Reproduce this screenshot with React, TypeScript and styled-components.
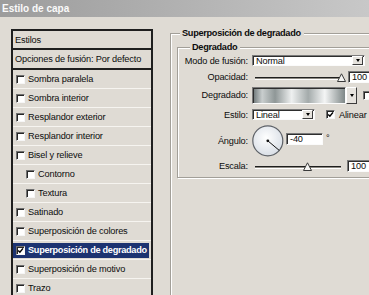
import React from 'react';
import styled, { createGlobalStyle } from 'styled-components';

const GlobalStyle = createGlobalStyle`
  html, body {
    margin: 0;
    padding: 0;
    background: #dfdbd4;
  }
  body {
    font-family: "Liberation Sans", Arial, sans-serif;
    font-size: 9.2px;
    letter-spacing: -0.15px;
    color: #0c0c0c;
  }
  fieldset, legend { font: inherit; }
`;

const BG = '#dfdbd4';

const Window = styled.div`
  width: 369px;
  height: 295px;
  overflow: hidden;
  background: ${BG};
  display: flex;
  flex-direction: column;
`;

const TitleBar = styled.div`
  height: 17px;
  flex: none;
  display: flex;
  align-items: center;
  padding-left: 2px;
  background: linear-gradient(90deg, #9c9c9c 0%, #c8c8c8 100%);
  color: #fafafa;
  font-weight: bold;
  font-size: 10px;
  letter-spacing: 0;
`;

const Body = styled.div`
  flex: 1;
  min-height: 0;
  display: flex;
  align-items: flex-start;
  gap: 17px;
  padding: 10px 0 0 11px;
`;

/* left: list of layer styles */
const StyleList = styled.div`
  width: 142px;
  flex: none;
  margin-top: 2px;
  box-sizing: border-box;
  border: 2px solid #1f1f1f;
  border-bottom: 0;
`;

const ListHead = styled.div<{ $h: number }>`
  height: ${(p) => p.$h}px;
  display: flex;
  align-items: center;
  padding-left: 2px;
  border-bottom: 2px solid #1f1f1f;
  white-space: nowrap;
`;

const ListRow = styled.div`
  height: 18px;
  display: flex;
  align-items: center;
  border-bottom: 1px solid #f6f4f0;
`;

const RowItem = styled.div<{ $indent?: boolean; $active?: boolean }>`
  flex: 1;
  height: 15px;
  margin-right: 2px;
  display: flex;
  align-items: center;
  gap: 3px;
  padding-left: ${(p) => (p.$indent ? 13 : 3)}px;
  background: ${(p) => (p.$active ? '#1c3371' : 'transparent')};
  color: ${(p) => (p.$active ? '#ffffff' : 'inherit')};
  font-weight: ${(p) => (p.$active ? 'bold' : 'normal')};
  letter-spacing: ${(p) => (p.$active ? '-0.3px' : 'inherit')};
  white-space: nowrap;
`;

const Box = styled.span`
  width: 9px;
  height: 9px;
  flex: none;
  box-sizing: border-box;
  background: #fff;
  border: 1px solid;
  border-color: #707070 #f6f6f6 #f6f6f6 #707070;
  box-shadow: inset 1px 1px 0 #262626;
  display: flex;
  align-items: center;
  justify-content: center;
`;

const Checkbox: React.FC<{ checked?: boolean; label?: string }> = ({ checked, label }) => (
  <Box role="checkbox" aria-checked={!!checked} aria-label={label}>
    {checked && (
      <svg width="7" height="7" viewBox="0 0 7 7">
        <path d="M1.2 3.4 L2.9 5.2 L6 1.4" fill="none" stroke="#000" strokeWidth="1.5" />
      </svg>
    )}
  </Box>
);

/* right: group boxes */
const Group = styled.fieldset<{ $pad: number; $top: number }>`
  flex: none;
  width: 260px;
  margin: ${(p) => p.$top}px 0 0 0;
  padding: 0 0 0 ${(p) => p.$pad}px;
  min-width: 0;
  border: 1px solid #a29f98;
  box-shadow: inset 1px 1px 0 #fff, 1px 1px 0 #fff;
`;

const OuterGroup = styled(Group)`
  height: 300px;
`;

const GroupTitle = styled.legend<{ $offset: number }>`
  margin-left: ${(p) => p.$offset}px;
  padding: 0 3px 0 2px;
  line-height: 12px;
  font-weight: bold;
  letter-spacing: -0.3px;
  background: ${BG};
  white-space: nowrap;
`;

const FormGrid = styled.div`
  display: grid;
  grid-template-columns: 71px auto;
  grid-template-rows: 15px 18px 18px 21px 32px 18px;
  column-gap: 3px;
  align-items: center;
  padding-bottom: 2px;
`;

const Label = styled.span`
  text-align: right;
  padding-right: 1px;
  white-space: nowrap;
`;

const Controls = styled.div<{ $gap?: number }>`
  display: flex;
  align-items: center;
  gap: ${(p) => p.$gap ?? 0}px;
  white-space: nowrap;
`;

const Sunken = styled.div<{ $w: number; $h: number }>`
  width: ${(p) => p.$w}px;
  height: ${(p) => p.$h}px;
  flex: none;
  box-sizing: border-box;
  background: #fff;
  border: 1px solid;
  border-color: #7a7a7a #fbfbfb #fbfbfb #7a7a7a;
  box-shadow: inset 1px 1px 0 #2e2e2e;
  display: flex;
  align-items: center;
  padding-left: 3px;
`;

const SelectBox = styled(Sunken)`
  justify-content: space-between;
  padding-right: 1px;
`;

const DropButton = styled.span<{ $h: number }>`
  width: 11px;
  height: ${(p) => p.$h}px;
  flex: none;
  box-sizing: border-box;
  background: #e6e3de;
  border: 1px solid;
  border-color: #ffffff #3c3c3c #3c3c3c #ffffff;
  display: flex;
  align-items: center;
  justify-content: center;
  &::after {
    content: '';
    border-left: 2.5px solid transparent;
    border-right: 2.5px solid transparent;
    border-top: 3px solid #000;
  }
`;

const GradientSwatch = styled(Sunken)`
  padding: 0;
  background: linear-gradient(
    90deg,
    #6b7475 0%,
    #c9cece 10%,
    #8f9797 24%,
    #eef0f0 42%,
    #a4abab 60%,
    #f4f5f5 78%,
    #7e8787 100%
  );
`;

const SliderWrap = styled.div<{ $w: number }>`
  position: relative;
  width: ${(p) => p.$w}px;
  height: 10px;
  margin-left: 3px;
  flex: none;
  display: flex;
  align-items: center;
  padding-top: 3px;
  box-sizing: border-box;
`;

const Track = styled.div`
  flex: 1;
  height: 1px;
  background: #8c8982;
  border-top: 1px solid #1e1e1e;
  border-bottom: 1px solid #ffffff;
`;

const Thumb = styled.svg`
  position: absolute;
  top: 1px;
  margin-left: -4.5px;
`;

const Slider: React.FC<{ width: number; value: number }> = ({ width, value }) => (
  <SliderWrap $w={width}>
    <Track />
    <Thumb width="9" height="9" viewBox="0 0 9 9" style={{ left: width * value }}>
      <path d="M0.5 8.5 L4.5 0.8 L8.5 8.5 Z" fill="#f4f4f2" stroke="#3a3a3a" strokeWidth="1" />
    </Thumb>
  </SliderWrap>
);

const Degree = styled.span`
  align-self: flex-start;
  margin: 8px 0 0 1px;
`;

const CheckLabel = styled.span<{ $ml?: number }>`
  display: flex;
  align-items: center;
  gap: 4px;
  margin-left: ${(p) => p.$ml ?? 0}px;
`;

const AngleDial: React.FC<{ angle: number }> = ({ angle }) => {
  const rad = (angle * Math.PI) / 180;
  const x2 = 15.8 + 15 * Math.cos(rad);
  const y2 = 15.8 - 15 * Math.sin(rad);
  return (
    <svg width="32" height="32" viewBox="0 0 32 32" style={{ flex: 'none' }}>
      <defs>
        <radialGradient id="dialFill" cx="45%" cy="40%" r="65%">
          <stop offset="0" stopColor="#ffffff" />
          <stop offset="1" stopColor="#d6dce4" />
        </radialGradient>
      </defs>
      <circle cx="15.8" cy="15.8" r="15" fill="url(#dialFill)" stroke="#5d6167" strokeWidth="1.2" />
      <line x1="15.8" y1="15.8" x2={x2} y2={y2} stroke="#111" strokeWidth="1" />
      <circle cx="15.8" cy="15.8" r="1.4" fill="#111" />
    </svg>
  );
};

const styles: { name: string; indent?: boolean; checked?: boolean }[] = [
  { name: 'Sombra paralela' },
  { name: 'Sombra interior' },
  { name: 'Resplandor exterior' },
  { name: 'Resplandor interior' },
  { name: 'Bisel y relieve' },
  { name: 'Contorno', indent: true },
  { name: 'Textura', indent: true },
  { name: 'Satinado' },
  { name: 'Superposición de colores' },
  { name: 'Superposición de degradado', checked: true },
  { name: 'Superposición de motivo' },
  { name: 'Trazo' },
];

const App: React.FC = () => (
  <>
    <GlobalStyle />
    <Window>
      <TitleBar>Estilo de capa</TitleBar>
      <Body>
        <StyleList>
          <ListHead $h={17}>Estilos</ListHead>
          <ListHead $h={18}>Opciones de fusión: Por defecto</ListHead>
          {styles.map((s) => (
            <ListRow key={s.name}>
              <RowItem $indent={s.indent} $active={s.checked}>
                <Checkbox checked={s.checked} />
                {s.name}
              </RowItem>
            </ListRow>
          ))}
        </StyleList>

        <OuterGroup $pad={6} $top={0}>
          <GroupTitle $offset={3}>Superposición de degradado</GroupTitle>
          <Group $pad={0} $top={2}>
            <GroupTitle $offset={12}>Degradado</GroupTitle>
            <FormGrid>
              <Label>Modo de fusión:</Label>
              <Controls>
                <SelectBox $w={113} $h={11}>
                  Normal
                  <DropButton $h={9} />
                </SelectBox>
              </Controls>

              <Label>Opacidad:</Label>
              <Controls $gap={7}>
                <Slider width={86} value={1} />
                <Sunken $w={26} $h={12}>100</Sunken>
              </Controls>

              <Label>Degradado:</Label>
              <Controls>
                <GradientSwatch $w={94} $h={17} />
                <DropButton $h={17} />
                <CheckLabel $ml={6}>
                  <Checkbox label="Invertir" />
                </CheckLabel>
              </Controls>

              <Label>Estilo:</Label>
              <Controls $gap={11}>
                <SelectBox $w={63} $h={11}>
                  Lineal
                  <DropButton $h={9} />
                </SelectBox>
                <CheckLabel>
                  <Checkbox checked />
                  Alinear
                </CheckLabel>
              </Controls>

              <Label>Ángulo:</Label>
              <Controls $gap={2}>
                <AngleDial angle={-40} />
                <Sunken $w={37} $h={12} style={{ marginBottom: 4 }}>-40</Sunken>
                <Degree>°</Degree>
              </Controls>

              <Label>Escala:</Label>
              <Controls $gap={6}>
                <Slider width={86} value={0.61} />
                <Sunken $w={26} $h={12}>100</Sunken>
              </Controls>
            </FormGrid>
          </Group>
        </OuterGroup>
      </Body>
    </Window>
  </>
);

export default App;
